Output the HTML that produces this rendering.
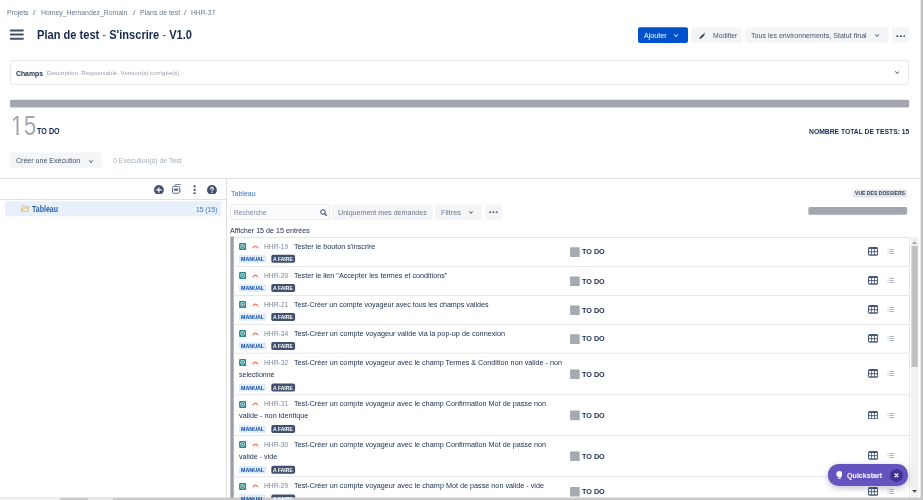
<!DOCTYPE html>
<html lang="fr">
<head>
<meta charset="utf-8">
<title>Plan de test - S'inscrire - V1.0</title>
<style>
*{box-sizing:border-box;margin:0;padding:0}
html,body{width:923px;height:500px;overflow:hidden;background:#fff}
body{position:relative;font-family:"Liberation Sans","DejaVu Sans",sans-serif;color:#172b4d}
.a{position:absolute;display:block}
.x{position:absolute;white-space:nowrap;transform-origin:0 50%;line-height:12px;height:12px}
#w{position:absolute;left:0;top:0;width:923px;height:500px;will-change:transform}
</style>
</head>
<body>
<div id="w">
<svg class="a" style="left:9px;top:28px" width="16" height="13" viewBox="0 0 16 13"><g fill="#42526e"><rect x=".9" y="1.45" width="13.9" height="1.95" rx=".7"/><rect x=".9" y="5.6" width="13.9" height="1.95" rx=".7"/><rect x=".9" y="9.7" width="13.9" height="1.95" rx=".7"/></g></svg>
<svg class="a" style="left:638px;top:27px" width="50" height="17" viewBox="0 0 50 17"><rect x="0.00" y="0.35" width="50.00" height="15.75" rx="2.0" fill="#0052cc"/></svg>
<svg class="a" style="left:674.2px;top:34.4px" width="4" height="3.6" viewBox="0 0 4 3.6"><path d="M.5 .6 L2.0 2.6 L3.5 .6" fill="none" stroke="#fff" stroke-width="1.0" stroke-linecap="round" stroke-linejoin="round"/></svg>
<svg class="a" style="left:691px;top:27px" width="52" height="17" viewBox="0 0 52 17"><rect x="0.00" y="0.35" width="51.30" height="15.75" rx="2.0" fill="#f4f5f7"/></svg>
<svg class="a" style="left:699px;top:32.6px" width="6.4" height="6.4" viewBox="0 0 10 10"><path d="M.6 9.4 L1.3 6.6 L6.6 1.3 L8.7 3.4 L3.4 8.7 Z M7.3 .6 L8.2 -.1 L10.1 1.8 L9.4 2.7 Z" fill="#344563"/></svg>
<svg class="a" style="left:745px;top:27px" width="144" height="17" viewBox="0 0 144 17"><rect x="0.30" y="0.35" width="143.50" height="15.75" rx="2.0" fill="#f4f5f7"/></svg>
<svg class="a" style="left:875px;top:34.4px" width="4" height="3.6" viewBox="0 0 4 3.6"><path d="M.5 .6 L2.0 2.6 L3.5 .6" fill="none" stroke="#42526e" stroke-width="1.0" stroke-linecap="round" stroke-linejoin="round"/></svg>
<svg class="a" style="left:891px;top:27px" width="19" height="17" viewBox="0 0 19 17"><rect x="0.80" y="0.35" width="17.30" height="15.75" rx="2.0" fill="#f4f5f7"/></svg>
<svg class="a" style="left:895.6px;top:34.6px" width="9.700000000000001" height="2.5" viewBox="0 0 9.700000000000001 2.5"><g fill="#42526e"><circle cx="1.25" cy="1.25" r="1.05"/><circle cx="4.85" cy="1.25" r="1.05"/><circle cx="8.45" cy="1.25" r="1.05"/></g></svg>
<div class="a" style="left:10px;top:60px;width:899.2px;height:24.8px;background:#fff;border:1px solid #e6e8ec;border-radius:2.5px"></div>
<svg class="a" style="left:894.6px;top:71.39999999999999px" width="4.4" height="3.6" viewBox="0 0 4.4 3.6"><path d="M.5 .6 L2.2 2.6 L3.9000000000000004 .6" fill="none" stroke="#42526e" stroke-width="1.0" stroke-linecap="round" stroke-linejoin="round"/></svg>
<svg class="a" style="left:10px;top:99px" width="900" height="9" viewBox="0 0 900 9"><rect x="0.00" y="0.80" width="899.20" height="7.60" rx="1.5" fill="#a2a6ae"/></svg>
<svg class="a" style="left:10px;top:152px" width="92" height="17" viewBox="0 0 92 17"><rect x="0.00" y="0.40" width="91.80" height="15.70" rx="2.0" fill="#f4f5f7"/></svg>
<svg class="a" style="left:88.5px;top:159.5px" width="4" height="3.6" viewBox="0 0 4 3.6"><path d="M.5 .6 L2.0 2.6 L3.5 .6" fill="none" stroke="#42526e" stroke-width="1.0" stroke-linecap="round" stroke-linejoin="round"/></svg>
<div class="a" style="left:0px;top:178px;width:920px;height:1px;background:#dfe1e6;"></div>
<div class="a" style="left:226px;top:178px;width:1px;height:320px;background:#dfe1e6;"></div>
<div class="a" style="left:0px;top:199px;width:226px;height:1px;background:#dfe1e6;"></div>
<svg class="a" style="left:153.9px;top:184.5px" width="9.8" height="9.8" viewBox="0 0 10 10"><circle cx="5" cy="5" r="5" fill="#42526e"/><path d="M5 2.7v4.6M2.7 5h4.6" stroke="#fff" stroke-width="1.15" stroke-linecap="round"/></svg>
<svg class="a" style="left:171.6px;top:184.4px" width="9.8" height="9.8" viewBox="0 0 10 10"><path d="M2.9 2.2V1.5Q2.9 .55 3.85 .55H8.5Q9.45 .55 9.45 1.5V6.2Q9.45 7.15 8.5 7.15H7.9" fill="none" stroke="#6b778c" stroke-width=".9"/><rect x=".55" y="2.45" width="7" height="7" rx="1" fill="none" stroke="#5e6c84" stroke-width="1"/><rect x="1.9" y="4.7" width="4.3" height="2.3" rx=".3" fill="#5e6c84"/></svg>
<svg class="a" style="left:192.7px;top:184.5px" width="3.2" height="9.8" viewBox="0 0 3.2 9.8"><g fill="#42526e"><circle cx="1.6" cy="1.4" r="1.15"/><circle cx="1.6" cy="4.95" r="1.15"/><circle cx="1.6" cy="8.5" r="1.15"/></g></svg>
<svg class="a" style="left:207.2px;top:184.5px" width="9.9" height="9.9" viewBox="0 0 10 10"><circle cx="5" cy="5" r="5" fill="#42526e"/><path d="M3.6 3.9Q3.6 2.4 5 2.4Q6.4 2.4 6.4 3.7Q6.4 4.5 5.6 5Q5 5.4 5 6.1" fill="none" stroke="#fff" stroke-width="1.05" stroke-linecap="round"/><circle cx="5" cy="7.7" r=".68" fill="#fff"/></svg>
<svg class="a" style="left:5px;top:201px" width="216" height="16" viewBox="0 0 216 16"><rect x="0.00" y="0.30" width="216.00" height="15.00" rx="0" fill="#e8f0fb"/></svg>
<svg class="a" style="left:20.6px;top:205.3px" width="8.6" height="7" viewBox="0 0 8.6 7"><path d="M.6 6.3V1.2Q.6 .6 1.2 .6H3.1L3.9 1.6H6.6Q7.2 1.6 7.2 2.2V2.9M.6 6.3L1.9 3H8L6.8 6.3Z" fill="none" stroke="#ecb661" stroke-width=".85" stroke-linejoin="round"/></svg>
<div class="a" style="left:230.3px;top:204.4px;width:99.4px;height:15.7px;background:#fafbfc;border:1px solid #e9ebef;border-radius:2px"></div>
<svg class="a" style="left:319.8px;top:209px" width="7" height="7" viewBox="0 0 7 7"><circle cx="3" cy="3" r="2.35" fill="none" stroke="#344563" stroke-width=".95"/><path d="M4.8 4.8L6.4 6.4" stroke="#344563" stroke-width="1.15" stroke-linecap="round"/></svg>
<svg class="a" style="left:332px;top:204px" width="101" height="17" viewBox="0 0 101 17"><rect x="0.00" y="0.40" width="100.70" height="15.70" rx="2.0" fill="#f4f5f7"/></svg>
<svg class="a" style="left:435px;top:204px" width="47" height="17" viewBox="0 0 47 17"><rect x="0.00" y="0.40" width="46.80" height="15.70" rx="2.0" fill="#f4f5f7"/></svg>
<svg class="a" style="left:469px;top:211.0px" width="3.8" height="3.4" viewBox="0 0 3.8 3.4"><path d="M.5 .6 L1.9 2.4 L3.3 .6" fill="none" stroke="#42526e" stroke-width="1.0" stroke-linecap="round" stroke-linejoin="round"/></svg>
<svg class="a" style="left:485px;top:204px" width="18" height="17" viewBox="0 0 18 17"><rect x="0.00" y="0.40" width="17.20" height="15.70" rx="2.0" fill="#f4f5f7"/></svg>
<svg class="a" style="left:489.4px;top:211.1px" width="8.9" height="2.3" viewBox="0 0 8.9 2.3"><g fill="#42526e"><circle cx="1.15" cy="1.15" r="0.95"/><circle cx="4.449999999999999" cy="1.15" r="0.95"/><circle cx="7.75" cy="1.15" r="0.95"/></g></svg>
<svg class="a" style="left:852px;top:189px" width="56" height="9" viewBox="0 0 56 9"><rect x="0.80" y="0.50" width="54.30" height="8.00" rx="1.5" fill="#e3e5ea"/></svg>
<svg class="a" style="left:808px;top:207px" width="100" height="8" viewBox="0 0 100 8"><rect x="0.40" y="0.10" width="98.70" height="7.60" rx="1.5" fill="#a2a6ae"/></svg>
<div class="a" style="left:230.4px;top:236.6px;width:679.6px;height:262px;background:#fff;border-top:1px solid #e4e6ea;border-right:1px solid #e4e6ea"></div>
<svg class="a" style="left:230px;top:236px" width="4" height="263" viewBox="0 0 4 263"><rect x="0.40" y="0.60" width="3.30" height="262.00" rx="0" fill="#9a9da4"/></svg>
<svg class="a" style="left:238.8px;top:243.2px" width="7.2" height="7" viewBox="0 0 7 7"><rect width="7" height="7" rx="1.2" fill="#25878b"/><path d="M1.7 2.3Q1.7 1.7 2.3 1.7H4.7Q5.3 1.7 5.3 2.3V3.9Q5.3 4.5 4.8 4.9L3.5 5.6L2.2 4.9Q1.7 4.5 1.7 3.9Z" fill="none" stroke="#fff" stroke-opacity=".85" stroke-width=".85"/><circle cx="3.5" cy="3.4" r=".65" fill="#fff" fill-opacity=".9"/></svg>
<svg class="a" style="left:251.5px;top:244.5px" width="7" height="4" viewBox="0 0 7 4"><path d="M1 2.8 Q3.4 -.5 5.8 2.8" fill="none" stroke="#ff6a4c" stroke-width="1.2" stroke-linecap="round"/></svg>
<svg class="a" style="left:238px;top:255px" width="29" height="8" viewBox="0 0 29 8"><rect x="0.80" y="0.00" width="27.30" height="7.50" rx="1.5" fill="#deebff"/></svg>
<svg class="a" style="left:271px;top:254px" width="25" height="9" viewBox="0 0 25 9"><rect x="0.30" y="0.80" width="23.80" height="7.90" rx="1.8" fill="#42526e"/></svg>
<svg class="a" style="left:570px;top:247px" width="10" height="10" viewBox="0 0 10 10"><rect x="0.10" y="0.30" width="9.60" height="9.60" rx="0.5" fill="#a5a9b1"/></svg>
<svg class="a" style="left:867.8px;top:247.25px" width="10.2" height="8.7" viewBox="0 0 10.2 8.7"><rect width="10.2" height="8.7" rx="1.7" fill="#4a5873"/><g fill="#fff"><rect x="1" y="2.1" width="2.2" height="2.1"/><rect x="3.95" y="2.1" width="2.2" height="2.1"/><rect x="6.9" y="2.1" width="2.2" height="2.1"/><rect x="1" y="5.2" width="2.2" height="2.1"/><rect x="3.95" y="5.2" width="2.2" height="2.1"/><rect x="6.9" y="5.2" width="2.2" height="2.1"/></g></svg>
<svg class="a" style="left:887px;top:249px" width="7" height="6" viewBox="0 0 7 6"><g fill="#aeb6c3"><rect x="2.4" y="0" width="4.5" height="1"/><rect x="2.4" y="2" width="4.5" height="1"/><rect x="2.4" y="4" width="4.5" height="1"/></g><g fill="#c5cbd4"><rect x=".5" y="0" width="1" height="1"/><rect x=".5" y="2" width="1" height="1"/><rect x=".5" y="4" width="1" height="1"/></g></svg>
<svg class="a" style="left:233px;top:265px" width="677" height="2" viewBox="0 0 677 2"><rect x="0.70" y="0.95" width="676.00" height="1.00" rx="0" fill="#e4e6ea"/></svg>
<svg class="a" style="left:238.8px;top:272.4px" width="7.2" height="7" viewBox="0 0 7 7"><rect width="7" height="7" rx="1.2" fill="#25878b"/><path d="M1.7 2.3Q1.7 1.7 2.3 1.7H4.7Q5.3 1.7 5.3 2.3V3.9Q5.3 4.5 4.8 4.9L3.5 5.6L2.2 4.9Q1.7 4.5 1.7 3.9Z" fill="none" stroke="#fff" stroke-opacity=".85" stroke-width=".85"/><circle cx="3.5" cy="3.4" r=".65" fill="#fff" fill-opacity=".9"/></svg>
<svg class="a" style="left:251.5px;top:273.8px" width="7" height="4" viewBox="0 0 7 4"><path d="M1 2.8 Q3.4 -.5 5.8 2.8" fill="none" stroke="#ff6a4c" stroke-width="1.2" stroke-linecap="round"/></svg>
<svg class="a" style="left:238px;top:284px" width="29" height="8" viewBox="0 0 29 8"><rect x="0.80" y="0.25" width="27.30" height="7.50" rx="1.5" fill="#deebff"/></svg>
<svg class="a" style="left:271px;top:284px" width="25" height="8" viewBox="0 0 25 8"><rect x="0.30" y="0.05" width="23.80" height="7.90" rx="1.8" fill="#42526e"/></svg>
<svg class="a" style="left:570px;top:276px" width="10" height="11" viewBox="0 0 10 11"><rect x="0.10" y="0.45" width="9.60" height="9.60" rx="0.5" fill="#a5a9b1"/></svg>
<svg class="a" style="left:867.8px;top:276.40px" width="10.2" height="8.7" viewBox="0 0 10.2 8.7"><rect width="10.2" height="8.7" rx="1.7" fill="#4a5873"/><g fill="#fff"><rect x="1" y="2.1" width="2.2" height="2.1"/><rect x="3.95" y="2.1" width="2.2" height="2.1"/><rect x="6.9" y="2.1" width="2.2" height="2.1"/><rect x="1" y="5.2" width="2.2" height="2.1"/><rect x="3.95" y="5.2" width="2.2" height="2.1"/><rect x="6.9" y="5.2" width="2.2" height="2.1"/></g></svg>
<svg class="a" style="left:887px;top:278px" width="7" height="6" viewBox="0 0 7 6"><g fill="#aeb6c3"><rect x="2.4" y="0" width="4.5" height="1"/><rect x="2.4" y="2" width="4.5" height="1"/><rect x="2.4" y="4" width="4.5" height="1"/></g><g fill="#c5cbd4"><rect x=".5" y="0" width="1" height="1"/><rect x=".5" y="2" width="1" height="1"/><rect x=".5" y="4" width="1" height="1"/></g></svg>
<svg class="a" style="left:233px;top:294px" width="677" height="2" viewBox="0 0 677 2"><rect x="0.70" y="0.95" width="676.00" height="1.00" rx="0" fill="#e4e6ea"/></svg>
<svg class="a" style="left:238.8px;top:301.4px" width="7.2" height="7" viewBox="0 0 7 7"><rect width="7" height="7" rx="1.2" fill="#25878b"/><path d="M1.7 2.3Q1.7 1.7 2.3 1.7H4.7Q5.3 1.7 5.3 2.3V3.9Q5.3 4.5 4.8 4.9L3.5 5.6L2.2 4.9Q1.7 4.5 1.7 3.9Z" fill="none" stroke="#fff" stroke-opacity=".85" stroke-width=".85"/><circle cx="3.5" cy="3.4" r=".65" fill="#fff" fill-opacity=".9"/></svg>
<svg class="a" style="left:251.5px;top:302.8px" width="7" height="4" viewBox="0 0 7 4"><path d="M1 2.8 Q3.4 -.5 5.8 2.8" fill="none" stroke="#ff6a4c" stroke-width="1.2" stroke-linecap="round"/></svg>
<svg class="a" style="left:238px;top:313px" width="29" height="8" viewBox="0 0 29 8"><rect x="0.80" y="0.25" width="27.30" height="7.50" rx="1.5" fill="#deebff"/></svg>
<svg class="a" style="left:271px;top:313px" width="25" height="8" viewBox="0 0 25 8"><rect x="0.30" y="0.05" width="23.80" height="7.90" rx="1.8" fill="#42526e"/></svg>
<svg class="a" style="left:570px;top:305px" width="10" height="11" viewBox="0 0 10 11"><rect x="0.10" y="0.45" width="9.60" height="9.60" rx="0.5" fill="#a5a9b1"/></svg>
<svg class="a" style="left:867.8px;top:305.40px" width="10.2" height="8.7" viewBox="0 0 10.2 8.7"><rect width="10.2" height="8.7" rx="1.7" fill="#4a5873"/><g fill="#fff"><rect x="1" y="2.1" width="2.2" height="2.1"/><rect x="3.95" y="2.1" width="2.2" height="2.1"/><rect x="6.9" y="2.1" width="2.2" height="2.1"/><rect x="1" y="5.2" width="2.2" height="2.1"/><rect x="3.95" y="5.2" width="2.2" height="2.1"/><rect x="6.9" y="5.2" width="2.2" height="2.1"/></g></svg>
<svg class="a" style="left:887px;top:307px" width="7" height="6" viewBox="0 0 7 6"><g fill="#aeb6c3"><rect x="2.4" y="0" width="4.5" height="1"/><rect x="2.4" y="2" width="4.5" height="1"/><rect x="2.4" y="4" width="4.5" height="1"/></g><g fill="#c5cbd4"><rect x=".5" y="0" width="1" height="1"/><rect x=".5" y="2" width="1" height="1"/><rect x=".5" y="4" width="1" height="1"/></g></svg>
<svg class="a" style="left:233px;top:323px" width="677" height="2" viewBox="0 0 677 2"><rect x="0.70" y="0.95" width="676.00" height="1.00" rx="0" fill="#e4e6ea"/></svg>
<svg class="a" style="left:238.8px;top:330.4px" width="7.2" height="7" viewBox="0 0 7 7"><rect width="7" height="7" rx="1.2" fill="#25878b"/><path d="M1.7 2.3Q1.7 1.7 2.3 1.7H4.7Q5.3 1.7 5.3 2.3V3.9Q5.3 4.5 4.8 4.9L3.5 5.6L2.2 4.9Q1.7 4.5 1.7 3.9Z" fill="none" stroke="#fff" stroke-opacity=".85" stroke-width=".85"/><circle cx="3.5" cy="3.4" r=".65" fill="#fff" fill-opacity=".9"/></svg>
<svg class="a" style="left:251.5px;top:331.8px" width="7" height="4" viewBox="0 0 7 4"><path d="M1 2.8 Q3.4 -.5 5.8 2.8" fill="none" stroke="#ff6a4c" stroke-width="1.2" stroke-linecap="round"/></svg>
<svg class="a" style="left:238px;top:342px" width="29" height="8" viewBox="0 0 29 8"><rect x="0.80" y="0.25" width="27.30" height="7.50" rx="1.5" fill="#deebff"/></svg>
<svg class="a" style="left:271px;top:342px" width="25" height="8" viewBox="0 0 25 8"><rect x="0.30" y="0.05" width="23.80" height="7.90" rx="1.8" fill="#42526e"/></svg>
<svg class="a" style="left:570px;top:334px" width="10" height="10" viewBox="0 0 10 10"><rect x="0.10" y="0.35" width="9.60" height="9.60" rx="0.5" fill="#a5a9b1"/></svg>
<svg class="a" style="left:867.8px;top:334.30px" width="10.2" height="8.7" viewBox="0 0 10.2 8.7"><rect width="10.2" height="8.7" rx="1.7" fill="#4a5873"/><g fill="#fff"><rect x="1" y="2.1" width="2.2" height="2.1"/><rect x="3.95" y="2.1" width="2.2" height="2.1"/><rect x="6.9" y="2.1" width="2.2" height="2.1"/><rect x="1" y="5.2" width="2.2" height="2.1"/><rect x="3.95" y="5.2" width="2.2" height="2.1"/><rect x="6.9" y="5.2" width="2.2" height="2.1"/></g></svg>
<svg class="a" style="left:887px;top:336px" width="7" height="6" viewBox="0 0 7 6"><g fill="#aeb6c3"><rect x="2.4" y="0" width="4.5" height="1"/><rect x="2.4" y="2" width="4.5" height="1"/><rect x="2.4" y="4" width="4.5" height="1"/></g><g fill="#c5cbd4"><rect x=".5" y="0" width="1" height="1"/><rect x=".5" y="2" width="1" height="1"/><rect x=".5" y="4" width="1" height="1"/></g></svg>
<svg class="a" style="left:233px;top:352px" width="677" height="2" viewBox="0 0 677 2"><rect x="0.70" y="0.70" width="676.00" height="1.00" rx="0" fill="#e4e6ea"/></svg>
<svg class="a" style="left:238.8px;top:359.2px" width="7.2" height="7" viewBox="0 0 7 7"><rect width="7" height="7" rx="1.2" fill="#25878b"/><path d="M1.7 2.3Q1.7 1.7 2.3 1.7H4.7Q5.3 1.7 5.3 2.3V3.9Q5.3 4.5 4.8 4.9L3.5 5.6L2.2 4.9Q1.7 4.5 1.7 3.9Z" fill="none" stroke="#fff" stroke-opacity=".85" stroke-width=".85"/><circle cx="3.5" cy="3.4" r=".65" fill="#fff" fill-opacity=".9"/></svg>
<svg class="a" style="left:251.5px;top:360.5px" width="7" height="4" viewBox="0 0 7 4"><path d="M1 2.8 Q3.4 -.5 5.8 2.8" fill="none" stroke="#ff6a4c" stroke-width="1.2" stroke-linecap="round"/></svg>
<svg class="a" style="left:238px;top:383px" width="29" height="9" viewBox="0 0 29 9"><rect x="0.80" y="0.80" width="27.30" height="7.50" rx="1.5" fill="#deebff"/></svg>
<svg class="a" style="left:271px;top:383px" width="25" height="9" viewBox="0 0 25 9"><rect x="0.30" y="0.60" width="23.80" height="7.90" rx="1.8" fill="#42526e"/></svg>
<svg class="a" style="left:570px;top:369px" width="10" height="11" viewBox="0 0 10 11"><rect x="0.10" y="0.45" width="9.60" height="9.60" rx="0.5" fill="#a5a9b1"/></svg>
<svg class="a" style="left:867.8px;top:369.40px" width="10.2" height="8.7" viewBox="0 0 10.2 8.7"><rect width="10.2" height="8.7" rx="1.7" fill="#4a5873"/><g fill="#fff"><rect x="1" y="2.1" width="2.2" height="2.1"/><rect x="3.95" y="2.1" width="2.2" height="2.1"/><rect x="6.9" y="2.1" width="2.2" height="2.1"/><rect x="1" y="5.2" width="2.2" height="2.1"/><rect x="3.95" y="5.2" width="2.2" height="2.1"/><rect x="6.9" y="5.2" width="2.2" height="2.1"/></g></svg>
<svg class="a" style="left:887px;top:371px" width="7" height="6" viewBox="0 0 7 6"><g fill="#aeb6c3"><rect x="2.4" y="0" width="4.5" height="1"/><rect x="2.4" y="2" width="4.5" height="1"/><rect x="2.4" y="4" width="4.5" height="1"/></g><g fill="#c5cbd4"><rect x=".5" y="0" width="1" height="1"/><rect x=".5" y="2" width="1" height="1"/><rect x=".5" y="4" width="1" height="1"/></g></svg>
<svg class="a" style="left:233px;top:394px" width="677" height="2" viewBox="0 0 677 2"><rect x="0.70" y="0.20" width="676.00" height="1.00" rx="0" fill="#e4e6ea"/></svg>
<svg class="a" style="left:238.8px;top:400.7px" width="7.2" height="7" viewBox="0 0 7 7"><rect width="7" height="7" rx="1.2" fill="#25878b"/><path d="M1.7 2.3Q1.7 1.7 2.3 1.7H4.7Q5.3 1.7 5.3 2.3V3.9Q5.3 4.5 4.8 4.9L3.5 5.6L2.2 4.9Q1.7 4.5 1.7 3.9Z" fill="none" stroke="#fff" stroke-opacity=".85" stroke-width=".85"/><circle cx="3.5" cy="3.4" r=".65" fill="#fff" fill-opacity=".9"/></svg>
<svg class="a" style="left:251.5px;top:402.0px" width="7" height="4" viewBox="0 0 7 4"><path d="M1 2.8 Q3.4 -.5 5.8 2.8" fill="none" stroke="#ff6a4c" stroke-width="1.2" stroke-linecap="round"/></svg>
<svg class="a" style="left:238px;top:425px" width="29" height="8" viewBox="0 0 29 8"><rect x="0.80" y="0.30" width="27.30" height="7.50" rx="1.5" fill="#deebff"/></svg>
<svg class="a" style="left:271px;top:425px" width="25" height="8" viewBox="0 0 25 8"><rect x="0.30" y="0.10" width="23.80" height="7.90" rx="1.8" fill="#42526e"/></svg>
<svg class="a" style="left:570px;top:410px" width="10" height="11" viewBox="0 0 10 11"><rect x="0.10" y="0.60" width="9.60" height="9.60" rx="0.5" fill="#a5a9b1"/></svg>
<svg class="a" style="left:867.8px;top:410.55px" width="10.2" height="8.7" viewBox="0 0 10.2 8.7"><rect width="10.2" height="8.7" rx="1.7" fill="#4a5873"/><g fill="#fff"><rect x="1" y="2.1" width="2.2" height="2.1"/><rect x="3.95" y="2.1" width="2.2" height="2.1"/><rect x="6.9" y="2.1" width="2.2" height="2.1"/><rect x="1" y="5.2" width="2.2" height="2.1"/><rect x="3.95" y="5.2" width="2.2" height="2.1"/><rect x="6.9" y="5.2" width="2.2" height="2.1"/></g></svg>
<svg class="a" style="left:887px;top:413px" width="7" height="6" viewBox="0 0 7 6"><g fill="#aeb6c3"><rect x="2.4" y="0" width="4.5" height="1"/><rect x="2.4" y="2" width="4.5" height="1"/><rect x="2.4" y="4" width="4.5" height="1"/></g><g fill="#c5cbd4"><rect x=".5" y="0" width="1" height="1"/><rect x=".5" y="2" width="1" height="1"/><rect x=".5" y="4" width="1" height="1"/></g></svg>
<svg class="a" style="left:233px;top:434px" width="677" height="2" viewBox="0 0 677 2"><rect x="0.70" y="0.95" width="676.00" height="1.00" rx="0" fill="#e4e6ea"/></svg>
<svg class="a" style="left:238.8px;top:441.4px" width="7.2" height="7" viewBox="0 0 7 7"><rect width="7" height="7" rx="1.2" fill="#25878b"/><path d="M1.7 2.3Q1.7 1.7 2.3 1.7H4.7Q5.3 1.7 5.3 2.3V3.9Q5.3 4.5 4.8 4.9L3.5 5.6L2.2 4.9Q1.7 4.5 1.7 3.9Z" fill="none" stroke="#fff" stroke-opacity=".85" stroke-width=".85"/><circle cx="3.5" cy="3.4" r=".65" fill="#fff" fill-opacity=".9"/></svg>
<svg class="a" style="left:251.5px;top:442.8px" width="7" height="4" viewBox="0 0 7 4"><path d="M1 2.8 Q3.4 -.5 5.8 2.8" fill="none" stroke="#ff6a4c" stroke-width="1.2" stroke-linecap="round"/></svg>
<svg class="a" style="left:238px;top:466px" width="29" height="8" viewBox="0 0 29 8"><rect x="0.80" y="0.05" width="27.30" height="7.50" rx="1.5" fill="#deebff"/></svg>
<svg class="a" style="left:271px;top:465px" width="25" height="9" viewBox="0 0 25 9"><rect x="0.30" y="0.85" width="23.80" height="7.90" rx="1.8" fill="#42526e"/></svg>
<svg class="a" style="left:570px;top:451px" width="10" height="11" viewBox="0 0 10 11"><rect x="0.10" y="0.45" width="9.60" height="9.60" rx="0.5" fill="#a5a9b1"/></svg>
<svg class="a" style="left:867.8px;top:451.40px" width="10.2" height="8.7" viewBox="0 0 10.2 8.7"><rect width="10.2" height="8.7" rx="1.7" fill="#4a5873"/><g fill="#fff"><rect x="1" y="2.1" width="2.2" height="2.1"/><rect x="3.95" y="2.1" width="2.2" height="2.1"/><rect x="6.9" y="2.1" width="2.2" height="2.1"/><rect x="1" y="5.2" width="2.2" height="2.1"/><rect x="3.95" y="5.2" width="2.2" height="2.1"/><rect x="6.9" y="5.2" width="2.2" height="2.1"/></g></svg>
<svg class="a" style="left:887px;top:453px" width="7" height="6" viewBox="0 0 7 6"><g fill="#aeb6c3"><rect x="2.4" y="0" width="4.5" height="1"/><rect x="2.4" y="2" width="4.5" height="1"/><rect x="2.4" y="4" width="4.5" height="1"/></g><g fill="#c5cbd4"><rect x=".5" y="0" width="1" height="1"/><rect x=".5" y="2" width="1" height="1"/><rect x=".5" y="4" width="1" height="1"/></g></svg>
<svg class="a" style="left:233px;top:476px" width="677" height="2" viewBox="0 0 677 2"><rect x="0.70" y="0.30" width="676.00" height="1.00" rx="0" fill="#e4e6ea"/></svg>
<svg class="a" style="left:238.8px;top:482.8px" width="7.2" height="7" viewBox="0 0 7 7"><rect width="7" height="7" rx="1.2" fill="#25878b"/><path d="M1.7 2.3Q1.7 1.7 2.3 1.7H4.7Q5.3 1.7 5.3 2.3V3.9Q5.3 4.5 4.8 4.9L3.5 5.6L2.2 4.9Q1.7 4.5 1.7 3.9Z" fill="none" stroke="#fff" stroke-opacity=".85" stroke-width=".85"/><circle cx="3.5" cy="3.4" r=".65" fill="#fff" fill-opacity=".9"/></svg>
<svg class="a" style="left:251.5px;top:484.1px" width="7" height="4" viewBox="0 0 7 4"><path d="M1 2.8 Q3.4 -.5 5.8 2.8" fill="none" stroke="#ff6a4c" stroke-width="1.2" stroke-linecap="round"/></svg>
<svg class="a" style="left:238px;top:494px" width="29" height="9" viewBox="0 0 29 9"><rect x="0.80" y="0.60" width="27.30" height="7.50" rx="1.5" fill="#deebff"/></svg>
<svg class="a" style="left:271px;top:494px" width="25" height="9" viewBox="0 0 25 9"><rect x="0.30" y="0.40" width="23.80" height="7.90" rx="1.8" fill="#42526e"/></svg>
<svg class="a" style="left:570px;top:486px" width="10" height="11" viewBox="0 0 10 11"><rect x="0.10" y="0.90" width="9.60" height="9.60" rx="0.5" fill="#a5a9b1"/></svg>
<svg class="a" style="left:867.8px;top:486.85px" width="10.2" height="8.7" viewBox="0 0 10.2 8.7"><rect width="10.2" height="8.7" rx="1.7" fill="#4a5873"/><g fill="#fff"><rect x="1" y="2.1" width="2.2" height="2.1"/><rect x="3.95" y="2.1" width="2.2" height="2.1"/><rect x="6.9" y="2.1" width="2.2" height="2.1"/><rect x="1" y="5.2" width="2.2" height="2.1"/><rect x="3.95" y="5.2" width="2.2" height="2.1"/><rect x="6.9" y="5.2" width="2.2" height="2.1"/></g></svg>
<svg class="a" style="left:887px;top:489px" width="7" height="6" viewBox="0 0 7 6"><g fill="#aeb6c3"><rect x="2.4" y="0" width="4.5" height="1"/><rect x="2.4" y="2" width="4.5" height="1"/><rect x="2.4" y="4" width="4.5" height="1"/></g><g fill="#c5cbd4"><rect x=".5" y="0" width="1" height="1"/><rect x=".5" y="2" width="1" height="1"/><rect x=".5" y="4" width="1" height="1"/></g></svg>
<svg class="a" style="left:911px;top:237px" width="8" height="261" viewBox="0 0 8 261"><rect x="0.00" y="0.00" width="7.30" height="260.50" rx="0" fill="#f1f1f1"/></svg>
<svg class="a" style="left:911px;top:246px" width="7" height="121" viewBox="0 0 7 121"><rect x="0.50" y="0.00" width="6.30" height="121.00" rx="0" fill="#c1c1c1"/></svg>
<svg class="a" style="left:912.2px;top:240.6px" width="5" height="3" viewBox="0 0 5 3"><path d="M0 3L2.5 .3L5 3Z" fill="#a3a3a3"/></svg>
<svg class="a" style="left:912.2px;top:490px" width="5" height="3" viewBox="0 0 5 3"><path d="M0 0L2.5 2.7L5 0Z" fill="#505050"/></svg>
<div class="a" style="left:920px;top:0px;width:3px;height:500px;background:#c2c2c2;border-left:1px solid #e6e6e6"></div>
<svg class="a" style="left:0px;top:497px" width="923" height="3" viewBox="0 0 923 3"><rect x="0.00" y="0.50" width="923.00" height="2.50" rx="0" fill="#c9c9c9"/></svg>
<svg class="a" style="left:0px;top:497px" width="60" height="3" viewBox="0 0 60 3"><rect x="0.00" y="0.50" width="60.00" height="2.50" rx="0" fill="#efefef"/></svg>
<svg class="a" style="left:88px;top:497px" width="25" height="3" viewBox="0 0 25 3"><rect x="0.00" y="0.50" width="25.00" height="2.50" rx="0" fill="#e6e6e6"/></svg>
<div class="a" style="left:827.6px;top:464.4px;width:80.2px;height:21.2px;background:#6554c0;border-radius:10.6px;box-shadow:0 2px 6px rgba(9,30,66,.28)"></div>
<svg class="a" style="left:835.6px;top:471.3px" width="6.8" height="8" viewBox="0 0 6.8 8"><path d="M3.4 0A3.1 3.1 0 0 0 1.7 5.7V6.4H5.1V5.7A3.1 3.1 0 0 0 3.4 0Z" fill="#fff"/><rect x="2" y="6.9" width="2.8" height=".9" rx=".4" fill="#fff"/></svg>
<svg class="a" style="left:889px;top:468px" width="14" height="14" viewBox="0 0 14 14"><rect x="0.90" y="0.90" width="13.00" height="13.00" rx="6.5" fill="#403294"/></svg>
<svg class="a" style="left:894.1px;top:473.1px" width="4.8" height="4.8" viewBox="0 0 4.8 4.8"><path d="M1 1L3.8 3.8M3.8 1L1 3.8" stroke="#fff" stroke-width="1.25" stroke-linecap="round"/></svg>
<div class="x" id="t0" style="left:6.8px;top:6.50px;font-size:7.4px;color:#6b778c;transform:scaleX(0.9385);">Projets</div>
<div class="x" id="t1" style="left:33px;top:6.50px;font-size:7.4px;color:#6b778c;transform:scaleX(1.1636);">/</div>
<div class="x" id="t2" style="left:40.8px;top:6.50px;font-size:7.4px;color:#6b778c;transform:scaleX(0.9253);">Homey_Hernandez_Romain</div>
<div class="x" id="t3" style="left:133.1px;top:6.50px;font-size:7.4px;color:#6b778c;transform:scaleX(1.1636);">/</div>
<div class="x" id="t4" style="left:139.5px;top:6.50px;font-size:7.4px;color:#6b778c;transform:scaleX(0.9384);">Plans de test</div>
<div class="x" id="t5" style="left:184.4px;top:6.50px;font-size:7.4px;color:#6b778c;transform:scaleX(1.1636);">/</div>
<div class="x" id="t6" style="left:191.4px;top:6.50px;font-size:7.4px;color:#6b778c;transform:scaleX(0.9063);">HHR-37</div>
<div class="x" id="t7" style="left:37.4px;top:29.40px;font-size:12.2px;color:#172b4d;font-weight:bold;transform:scaleX(0.9105);">Plan de test <span style="font-weight:normal;color:#42526e">-</span> S'inscrire <span style="font-weight:normal;color:#42526e">-</span> V1.0</div>
<div class="x" id="t8" style="left:643.8px;top:30.10px;font-size:7.9px;color:#fff;transform:scaleX(0.9034);">Ajouter</div>
<div class="x" id="t9" style="left:712.6px;top:30.10px;font-size:7.9px;color:#42526e;transform:scaleX(0.8690);">Modifier</div>
<div class="x" id="t10" style="left:751.3px;top:30.10px;font-size:7.9px;color:#42526e;transform:scaleX(0.8972);">Tous les environnements, Statut final</div>
<div class="x" id="t11" style="left:16px;top:67.50px;font-size:7.2px;color:#172b4d;font-weight:bold;transform:scaleX(0.9521);">Champs</div>
<div class="x" id="t12" style="left:47.3px;top:66.60px;font-size:6.2px;color:#97a0af;transform:scaleX(0.9955);">Description, Responsable, Version(s) corrigée(s)</div>
<div class="x" id="t13" style="left:11.1px;top:120.30px;font-size:26.8px;color:#a0a7b4;letter-spacing:1px;transform:scaleX(0.8173);">15</div>
<div class="x" id="t14" style="left:36.5px;top:126.30px;font-size:8.2px;color:#172b4d;font-weight:bold;transform:scaleX(0.8805);">TO DO</div>
<div class="x" id="t15" style="left:808.8px;top:125.50px;font-size:7.8px;color:#172b4d;font-weight:bold;transform:scaleX(0.8671);">NOMBRE TOTAL DE TESTS: 15</div>
<div class="x" id="t16" style="left:16px;top:155.10px;font-size:7.9px;color:#42526e;transform:scaleX(0.8938);">Créer une Exécution</div>
<div class="x" id="t17" style="left:113px;top:155.10px;font-size:7.6px;color:#a5adba;transform:scaleX(0.9173);">0 Exécution(s) de Test</div>
<div class="x" id="t18" style="left:32.2px;top:203.10px;font-size:8.3px;color:#2a5fa8;font-weight:bold;transform:scaleX(0.8455);">Tableau</div>
<div class="x" id="t19" style="left:195.8px;top:203.80px;font-size:8px;color:#3d74be;transform:scaleX(0.8399);">15 (15)</div>
<div class="x" id="t20" style="left:230.5px;top:188.20px;font-size:7.3px;color:#3572c6;transform:scaleX(0.9623);">Tableau</div>
<div class="x" id="t21" style="left:234.1px;top:207.10px;font-size:7.6px;color:#7a869a;transform:scaleX(0.8847);">Recherche</div>
<div class="x" id="t22" style="left:337.5px;top:207.10px;font-size:8px;color:#6b778c;transform:scaleX(0.8874);">Uniquement mes demandes</div>
<div class="x" id="t23" style="left:441px;top:207.10px;font-size:8px;color:#6b778c;transform:scaleX(0.9182);">Filtres</div>
<div class="x" id="t24" style="left:855px;top:187.00px;font-size:5.8px;color:#344563;font-weight:bold;transform:scaleX(0.8767);">VUE DES DOSSIERS</div>
<div class="x" id="t25" style="left:230.4px;top:225.20px;font-size:7.7px;color:#172b4d;transform:scaleX(0.9316);">Afficher 15 de 15 entrées</div>
<div class="x" id="t26" style="left:263.9px;top:240.50px;font-size:7.7px;color:#7a869a;transform:scaleX(0.8675);">HHR-19</div>
<div class="x" id="t27" style="left:293.8px;top:240.50px;font-size:7.7px;color:#172b4d;transform:scaleX(0.9352);">Tester le bouton s'inscrire</div>
<div class="x" id="t28" style="left:240.6px;top:252.90px;font-size:6.1px;color:#0747a6;font-weight:bold;transform:scaleX(0.8748);">MANUAL</div>
<div class="x" id="t29" style="left:273.2px;top:252.90px;font-size:6.1px;color:#fff;font-weight:bold;transform:scaleX(0.8315);">A FAIRE</div>
<div class="x" id="t30" style="left:582.4px;top:246.40px;font-size:7.7px;color:#172b4d;font-weight:bold;transform:scaleX(0.9373);">TO DO</div>
<div class="x" id="t31" style="left:263.9px;top:269.75px;font-size:7.7px;color:#7a869a;transform:scaleX(0.8675);">HHR-20</div>
<div class="x" id="t32" style="left:293.8px;top:269.75px;font-size:7.7px;color:#172b4d;transform:scaleX(0.9348);">Tester le lien "Accepter les termes et conditions"</div>
<div class="x" id="t33" style="left:240.6px;top:282.15px;font-size:6.1px;color:#0747a6;font-weight:bold;transform:scaleX(0.8748);">MANUAL</div>
<div class="x" id="t34" style="left:273.2px;top:282.15px;font-size:6.1px;color:#fff;font-weight:bold;transform:scaleX(0.8315);">A FAIRE</div>
<div class="x" id="t35" style="left:582.4px;top:275.55px;font-size:7.7px;color:#172b4d;font-weight:bold;transform:scaleX(0.9373);">TO DO</div>
<div class="x" id="t36" style="left:263.9px;top:298.75px;font-size:7.7px;color:#7a869a;transform:scaleX(0.8675);">HHR-21</div>
<div class="x" id="t37" style="left:293.8px;top:298.75px;font-size:7.7px;color:#172b4d;transform:scaleX(0.9271);">Test-Créer un compte voyageur avec tous les champs valides</div>
<div class="x" id="t38" style="left:240.6px;top:311.15px;font-size:6.1px;color:#0747a6;font-weight:bold;transform:scaleX(0.8748);">MANUAL</div>
<div class="x" id="t39" style="left:273.2px;top:311.15px;font-size:6.1px;color:#fff;font-weight:bold;transform:scaleX(0.8315);">A FAIRE</div>
<div class="x" id="t40" style="left:582.4px;top:304.55px;font-size:7.7px;color:#172b4d;font-weight:bold;transform:scaleX(0.9373);">TO DO</div>
<div class="x" id="t41" style="left:263.9px;top:327.75px;font-size:7.7px;color:#7a869a;transform:scaleX(0.8675);">HHR-34</div>
<div class="x" id="t42" style="left:293.8px;top:327.75px;font-size:7.7px;color:#172b4d;transform:scaleX(0.9423);">Test-Créer un compte voyageur valide via la pop-up de connexion</div>
<div class="x" id="t43" style="left:240.6px;top:340.15px;font-size:6.1px;color:#0747a6;font-weight:bold;transform:scaleX(0.8748);">MANUAL</div>
<div class="x" id="t44" style="left:273.2px;top:340.15px;font-size:6.1px;color:#fff;font-weight:bold;transform:scaleX(0.8315);">A FAIRE</div>
<div class="x" id="t45" style="left:582.4px;top:333.45px;font-size:7.7px;color:#172b4d;font-weight:bold;transform:scaleX(0.9373);">TO DO</div>
<div class="x" id="t46" style="left:263.9px;top:356.50px;font-size:7.7px;color:#7a869a;transform:scaleX(0.8675);">HHR-32</div>
<div class="x" id="t47" style="left:293.8px;top:356.50px;font-size:7.7px;color:#172b4d;transform:scaleX(0.9394);">Test-Créer un compte voyageur avec le champ Termes &amp; Condition non valide - non</div>
<div class="x" id="t48" style="left:238.8px;top:368.50px;font-size:7.7px;color:#172b4d;transform:scaleX(0.9124);">selectionné</div>
<div class="x" id="t49" style="left:240.6px;top:381.70px;font-size:6.1px;color:#0747a6;font-weight:bold;transform:scaleX(0.8748);">MANUAL</div>
<div class="x" id="t50" style="left:273.2px;top:381.70px;font-size:6.1px;color:#fff;font-weight:bold;transform:scaleX(0.8315);">A FAIRE</div>
<div class="x" id="t51" style="left:582.4px;top:368.55px;font-size:7.7px;color:#172b4d;font-weight:bold;transform:scaleX(0.9373);">TO DO</div>
<div class="x" id="t52" style="left:263.9px;top:398.00px;font-size:7.7px;color:#7a869a;transform:scaleX(0.8675);">HHR-31</div>
<div class="x" id="t53" style="left:293.8px;top:398.00px;font-size:7.7px;color:#172b4d;transform:scaleX(0.9391);">Test-Créer un compte voyageur avec le champ Confirmation Mot de passe non</div>
<div class="x" id="t54" style="left:238.8px;top:410.00px;font-size:7.7px;color:#172b4d;transform:scaleX(0.9481);">valide - non identique</div>
<div class="x" id="t55" style="left:240.6px;top:423.20px;font-size:6.1px;color:#0747a6;font-weight:bold;transform:scaleX(0.8748);">MANUAL</div>
<div class="x" id="t56" style="left:273.2px;top:423.20px;font-size:6.1px;color:#fff;font-weight:bold;transform:scaleX(0.8315);">A FAIRE</div>
<div class="x" id="t57" style="left:582.4px;top:409.70px;font-size:7.7px;color:#172b4d;font-weight:bold;transform:scaleX(0.9373);">TO DO</div>
<div class="x" id="t58" style="left:263.9px;top:438.75px;font-size:7.7px;color:#7a869a;transform:scaleX(0.8675);">HHR-30</div>
<div class="x" id="t59" style="left:293.8px;top:438.75px;font-size:7.7px;color:#172b4d;transform:scaleX(0.9391);">Test-Créer un compte voyageur avec le champ Confirmation Mot de passe non</div>
<div class="x" id="t60" style="left:238.8px;top:450.75px;font-size:7.7px;color:#172b4d;transform:scaleX(0.9310);">valide - vide</div>
<div class="x" id="t61" style="left:240.6px;top:463.95px;font-size:6.1px;color:#0747a6;font-weight:bold;transform:scaleX(0.8748);">MANUAL</div>
<div class="x" id="t62" style="left:273.2px;top:463.95px;font-size:6.1px;color:#fff;font-weight:bold;transform:scaleX(0.8315);">A FAIRE</div>
<div class="x" id="t63" style="left:582.4px;top:450.55px;font-size:7.7px;color:#172b4d;font-weight:bold;transform:scaleX(0.9373);">TO DO</div>
<div class="x" id="t64" style="left:263.9px;top:480.10px;font-size:7.7px;color:#7a869a;transform:scaleX(0.8675);">HHR-29</div>
<div class="x" id="t65" style="left:293.8px;top:480.10px;font-size:7.7px;color:#172b4d;transform:scaleX(0.9406);">Test-Créer un compte voyageur avec le champ Mot de passe non valide - vide</div>
<div class="x" id="t66" style="left:240.6px;top:492.50px;font-size:6.1px;color:#0747a6;font-weight:bold;transform:scaleX(0.8748);">MANUAL</div>
<div class="x" id="t67" style="left:273.2px;top:492.50px;font-size:6.1px;color:#fff;font-weight:bold;transform:scaleX(0.8315);">A FAIRE</div>
<div class="x" id="t68" style="left:582.4px;top:486.00px;font-size:7.7px;color:#172b4d;font-weight:bold;transform:scaleX(0.9373);">TO DO</div>
<div class="x" id="t69" style="left:847px;top:469.80px;font-size:7.9px;color:#fff;font-weight:bold;transform:scaleX(0.9018);">Quickstart</div>
<svg class="a" style="left:11px;top:131px" width="14" height="7" viewBox="0 0 14 7"><rect x=".3" y="1.8" width="5.05" height="4.8" fill="#fff"/><rect x="7.75" y="1.8" width="5" height="4.8" fill="#fff"/></svg>
</div>
</body>
</html>
